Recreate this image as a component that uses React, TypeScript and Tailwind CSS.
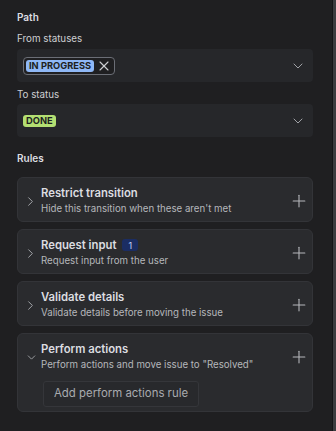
import { ChevronDown, ChevronRight, Plus, X } from "lucide-react";

type Rule = {
  title: string;
  description: string;
  count?: number;
  open?: boolean;
};

const rules: Rule[] = [
  { title: "Restrict transition", description: "Hide this transition when these aren't met" },
  { title: "Request input", description: "Request input from the user", count: 1 },
  { title: "Validate details", description: "Validate details before moving the issue" },
  {
    title: "Perform actions",
    description: 'Perform actions and move issue to "Resolved"',
    open: true,
  },
];

export default function App() {
  return (
    <div
      className="flex h-[431px] w-[336px] overflow-hidden bg-[#1f1f21] text-[#cecfd2]"
      style={{ fontFamily: "Inter, 'Noto Sans', sans-serif" }}
    >
      <main className="flex flex-1 flex-col pl-[17px] pr-[19px] pt-[9px]">
        <h2 className="text-[10px] font-semibold leading-4 text-[#dcdde0]">Path</h2>

        <FieldLabel className="mt-[5px]">From statuses</FieldLabel>
        <SelectBox className="mt-px">
          <span className="flex h-[18px] items-center gap-[2px] rounded-[4px] border border-[#6b6e76] bg-[#1f1f21] pl-[2px] pr-[2px]">
            <Lozenge tone="bg-[#8fb8f6]">In progress</Lozenge>
            <X className="h-[16px] w-[16px] text-[#cecfd2]" strokeWidth={1.6} />
          </span>
        </SelectBox>

        <FieldLabel className="mt-[4px]">To status</FieldLabel>
        <SelectBox>
          <Lozenge tone="bg-[#b3df72]">Done</Lozenge>
        </SelectBox>

        <h2 className="mt-[13px] text-[10px] font-semibold leading-4 text-[#dcdde0]">Rules</h2>

        <div className="mt-[11px] flex flex-col gap-[7px]">
          {rules.map((rule) => (
            <RuleCard key={rule.title} rule={rule} />
          ))}
        </div>
      </main>
      <div className="w-[4px] border-l border-[#151517] bg-[#3b3c3f]" />
    </div>
  );
}

function FieldLabel({ children, className }: { children: string; className?: string }) {
  return (
    <p className={`flex h-[18px] items-center text-[9.8px] text-[#cecfd2] ${className ?? ""}`}>
      {children}
    </p>
  );
}

function SelectBox({ children, className }: { children: React.ReactNode; className?: string }) {
  return (
    <div
      className={`flex h-[33px] items-center justify-between rounded-[4px] bg-[#26272a] pl-[6px] pr-[7px] ${className ?? ""}`}
    >
      {children}
      <ChevronDown className="h-[16px] w-[16px] text-[#a9abaf]" strokeWidth={1.4} />
    </div>
  );
}

function Lozenge({ children, tone }: { children: string; tone: string }) {
  return (
    <span
      className={`flex h-[12px] items-center rounded-[3px] px-[3px] text-[9.3px] font-bold uppercase leading-none text-[#1e1f21] ${tone}`}
    >
      {children}
    </span>
  );
}

function RuleCard({ rule }: { rule: Rule }) {
  return (
    <section className="rounded-[6px] border border-[#333438] bg-[#2a2b2e] pb-[4px] pt-[7px]">
      <div className="flex items-center">
        <div className="flex w-[22px] justify-end pr-[2px]">
          {rule.open ? (
            <ChevronDown className="h-[13px] w-[13px] text-[#a9abaf]" strokeWidth={1.6} />
          ) : (
            <ChevronRight className="h-[15px] w-[15px] text-[#a9abaf]" strokeWidth={1.5} />
          )}
        </div>
        <div className="ml-[1px] flex-1">
          <div className="flex items-center gap-[6px]">
            <p className="text-[11.3px] font-semibold leading-4 text-[#dcdde0]">{rule.title}</p>
            {rule.count ? (
              <span className="flex h-[12px] w-[16px] items-center justify-center rounded-[3px] bg-[#1b2d63] text-[9px] leading-none text-[#c3d4f7]">
                {rule.count}
              </span>
            ) : null}
          </div>
          <p className="text-[9.7px] leading-4 text-[#b5b7bb]">{rule.description}</p>
        </div>
        <Plus className="mr-[3px] h-[20px] w-[20px] text-[#b5b7bb]" strokeWidth={1.3} />
      </div>

      {rule.open ? (
        <button className="ml-[25px] mt-[8px] h-[26px] rounded-[3px] border border-[#35363a] bg-[#28292c] px-[10px] text-[11.4px] text-[#a9abaf]">
          Add perform actions rule
        </button>
      ) : null}
    </section>
  );
}
